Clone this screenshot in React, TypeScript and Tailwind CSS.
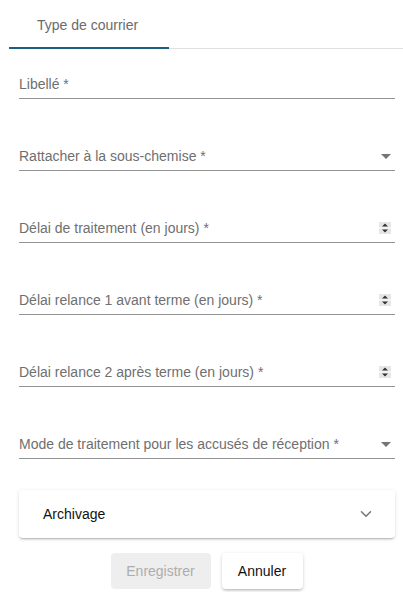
import { ChevronDown } from "lucide-react";

const fields: { label: string; kind: "text" | "select" | "number" }[] = [
  { label: "Libellé *", kind: "text" },
  { label: "Rattacher à la sous-chemise *", kind: "select" },
  { label: "Délai de traitement (en jours) *", kind: "number" },
  { label: "Délai relance 1 avant terme (en jours) *", kind: "number" },
  { label: "Délai relance 2 après terme (en jours) *", kind: "number" },
  { label: "Mode de traitement pour les accusés de réception *", kind: "select" },
];

function Spinner() {
  return (
    <svg width="12" height="12" viewBox="0 0 12 12" className="shrink-0">
      <rect x="0" y="0" width="12" height="12" fill="#e6e6e6" />
      <rect x="0" y="5.5" width="12" height="1" fill="#ffffff" />
      <path d="M3 4.5 L6 1.5 L9 4.5 Z" fill="#333" />
      <path d="M3 7.5 L6 10.5 L9 7.5 Z" fill="#333" />
    </svg>
  );
}

function Caret() {
  return (
    <svg width="10" height="5" viewBox="0 0 10 5" className="shrink-0">
      <path d="M0 0 L10 0 L5 5 Z" fill="#757575" />
    </svg>
  );
}

function Field({ label, kind }: { label: string; kind: "text" | "select" | "number" }) {
  return (
    <div className="flex h-[72px] items-end">
      <div className="flex w-full items-center justify-between border-b border-[#949494] pb-[4px]">
        <span className="text-sm text-[#6f6f6f]">{label}</span>
        <span className="mr-[4px] flex items-center">
          {kind === "select" && <Caret />}
          {kind === "number" && <Spinner />}
        </span>
      </div>
    </div>
  );
}

export default function App() {
  return (
    <div className="h-[592px] w-[403px] bg-white font-['Liberation_Sans',Arial,sans-serif]">
      <div className="flex items-end">
        <div className="ml-[9px] flex h-[49px] w-[160px] items-center border-b-2 border-[#1a5f80] pl-[28px] pt-[3px]">
          <span className="text-sm text-[#6b6b6b]">Type de courrier</span>
        </div>
        <div className="flex-1 border-b border-[#e0e0e0]" />
      </div>
      <div className="px-[19px] pr-[8px]">
        <div className="-mt-[22px]">
          {fields.map((f) => (
            <Field key={f.label} label={f.label} kind={f.kind} />
          ))}
        </div>
        <div className="mt-[31px] flex h-[48px] items-center justify-between rounded-[4px] pl-[24px] pr-[20px] shadow-[0_2px_2px_-1px_rgba(0,0,0,0.25),0_1px_4px_0_rgba(0,0,0,0.12)]">
          <span className="text-sm text-[#111]">Archivage</span>
          <ChevronDown className="size-[18px] text-[#757575]" strokeWidth={2} />
        </div>
        <div className="mt-[15px] flex justify-center gap-[11px] pr-px">
          <button
            type="button"
            className="h-[36px] w-[100px] rounded-[4px] bg-[#eeeeee] text-sm text-[#adadad]"
          >
            Enregistrer
          </button>
          <button
            type="button"
            className="h-[36px] w-[81px] rounded-[4px] bg-white text-sm text-[#111] shadow-[0_2px_3px_-1px_rgba(0,0,0,0.25),0_1px_4px_0_rgba(0,0,0,0.12)]"
          >
            Annuler
          </button>
        </div>
      </div>
    </div>
  );
}
